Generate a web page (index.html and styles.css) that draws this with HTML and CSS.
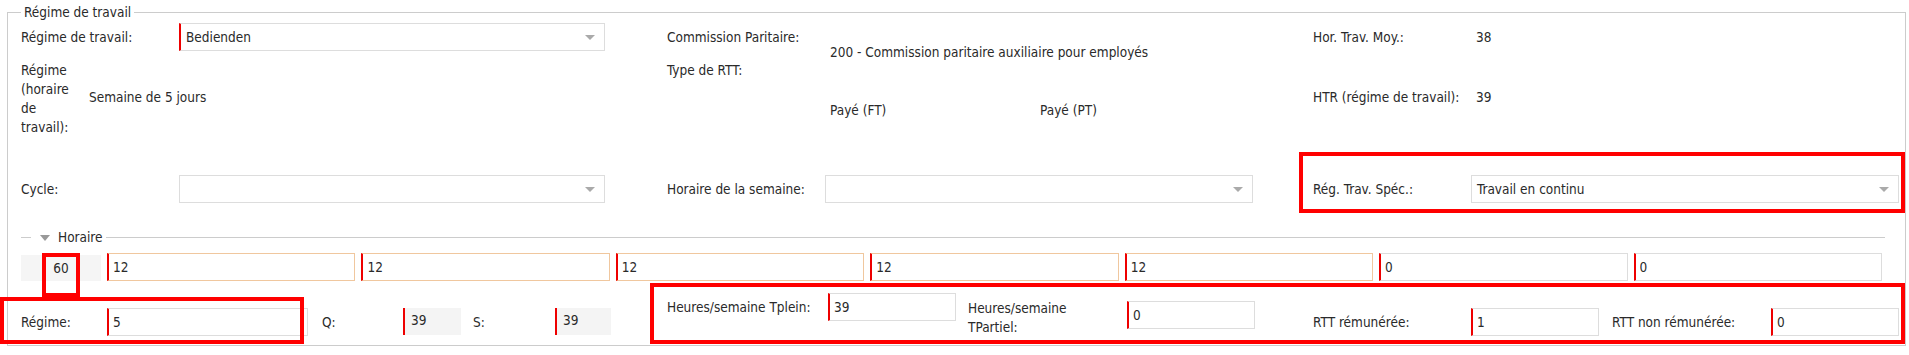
FILE: index.html
```html
<!DOCTYPE html>
<html lang="fr">
<head>
  <meta charset="UTF-8" />
  <meta name="viewport" content="width=device-width, initial-scale=1.0"/>
  <title>Régime de travail</title>
  <link rel="stylesheet" href="styles.css">
</head>
<body>
  <fieldset class="panel">
    <legend>Régime de travail</legend>

    <div class="row row-top">
      <div class="cell">
        <span class="lbl">Régime de travail:</span>
        <div class="select required">Bedienden</div>
      </div>
      <div class="cell">
        <span class="lbl">Commission Paritaire:</span>
        <span class="value value-low">200 - Commission paritaire auxiliaire pour employés</span>
      </div>
      <div class="cell">
        <span class="lbl">Hor. Trav. Moy.:</span>
        <span class="value">38</span>
      </div>
    </div>

    <div class="row row-mid">
      <div class="cell">
        <span class="lbl lbl-narrow">Régime (horaire de travail):</span>
        <span class="value value-center">Semaine de 5 jours</span>
      </div>
      <div class="cell">
        <span class="lbl">Type de RTT:</span>
        <span class="value value-rtt">Payé (FT)</span>
        <span class="value value-rtt">Payé (PT)</span>
      </div>
      <div class="cell">
        <span class="lbl lbl-center">HTR (régime de travail):</span>
        <span class="value value-center">39</span>
      </div>
    </div>

    <div class="row row-cycle">
      <div class="cell">
        <span class="lbl">Cycle:</span>
        <div class="select select-first"></div>
      </div>
      <div class="cell">
        <span class="lbl">Horaire de la semaine:</span>
        <div class="select"></div>
      </div>
      <div class="cell">
        <span class="lbl">Rég. Trav. Spéc.:</span>
        <div class="select">Travail en continu</div>
      </div>
    </div>

    <div class="section-head">
      <span class="caret"></span>
      <span class="section-title">Horaire</span>
    </div>

    <div class="hours">
      <div class="total">60</div>
      <input class="field day" type="text" value="12">
      <input class="field day" type="text" value="12">
      <input class="field day" type="text" value="12">
      <input class="field day" type="text" value="12">
      <input class="field day" type="text" value="12">
      <input class="field" type="text" value="0">
      <input class="field" type="text" value="0">
    </div>

    <div class="row row-bottom">
      <div class="cell">
        <span class="lbl lbl-regime">Régime:</span>
        <input class="field f-regime" type="text" value="5">
        <span class="lbl lbl-q">Q:</span>
        <div class="readout r-q">39</div>
        <span class="lbl lbl-s">S:</span>
        <div class="readout r-s">39</div>
      </div>
      <div class="cell">
        <span class="lbl lbl-plein">Heures/semaine Tplein:</span>
        <input class="field f-small f-plein" type="text" value="39">
        <span class="lbl lbl-partiel">Heures/semaine TPartiel:</span>
        <input class="field f-small f-partiel" type="text" value="0">
      </div>
      <div class="cell cell-rtt">
        <span class="lbl">RTT rémunérée:</span>
        <input class="field f-small" type="text" value="1">
        <span class="lbl lbl-nonrem">RTT non rémunérée:</span>
        <input class="field f-small" type="text" value="0">
      </div>
    </div>
  </fieldset>

  <!-- annotations -->
  <div class="mark mark-spec"></div>
  <div class="mark mark-total"></div>
  <div class="mark mark-regime"></div>
  <div class="mark mark-weekly"></div>
</body>
</html>
```

FILE: styles.css
```css
body {
  margin: 0;
  font-family: "DejaVu Sans Condensed", "DejaVu Sans", sans-serif;
  font-size: 13.5px;
  color: #2a2a2a;
  background: #fff;
}
.panel {
  margin: 4px 3px 0 7px;
  padding: 0 20px 9px 13px;
  border: 1px solid #ccc;
  min-width: 0;
}
.panel legend {
  padding: 0 3px;
  line-height: 16px;
}
.row {
  display: grid;
  grid-template-columns: 586px 586px 586px;
  column-gap: 60px;
}
.cell {
  display: flex;
  align-items: flex-start;
}
.lbl {
  flex: none;
  width: 158px;
  line-height: 28px;
}
.value {
  line-height: 28px;
  margin-left: 5px;
}
.select {
  position: relative;
  flex: none;
  width: 428px;
  height: 28px;
  box-sizing: border-box;
  border: 1px solid #ddd;
  padding: 0 5px;
  line-height: 26px;
}
.select::after {
  content: "";
  position: absolute;
  right: 9px;
  top: 11px;
  border-left: 5px solid transparent;
  border-right: 5px solid transparent;
  border-top: 5px solid #aaa;
}
.select.required {
  border-left: 2px solid #e00;
}
.row-top .select,
.select-first {
  width: 426px;
}

.row-top {
  margin-top: 3px;
  height: 28px;
}
.value-low {
  margin-top: 15px;
}

.row-mid {
  margin-top: 10px;
  height: 76px;
}
.row-mid .lbl,
.row-mid .value {
  line-height: 19px;
}
.lbl-narrow {
  width: 62px;
}
.value-center {
  margin-top: 27px;
}
.lbl-narrow + .value {
  margin-left: 6px;
}
.lbl-center {
  margin-top: 27px;
}
.value-rtt {
  width: 205px;
  margin-top: 40px;
}

.row-cycle {
  margin-top: 38px;
  height: 28px;
}

.section-head {
  display: flex;
  align-items: center;
  margin-top: 26px;
  height: 16px;
}
.section-head::before {
  content: "";
  width: 10px;
  border-top: 1px solid #ccc;
}
.section-head::after {
  content: "";
  flex: 1;
  margin-left: 3px;
  border-top: 1px solid #ccc;
}
.caret {
  margin: 2px 8px 0 9px;
  border-left: 5px solid transparent;
  border-right: 5px solid transparent;
  border-top: 6px solid #999;
}

.hours {
  display: flex;
  gap: 6px;
  width: 1861px;
  margin-top: 8px;
  height: 28px;
}
.total {
  flex: none;
  width: 80px;
  margin-top: 2px;
  background: #f5f5f5;
  text-align: center;
  line-height: 27px;
}
.field {
  min-width: 0;
  height: 28px;
  box-sizing: border-box;
  margin: 0;
  padding: 0 4px;
  border: 1px solid #ddd;
  border-left: 2px solid #e00;
  font: inherit;
  color: #2a2a2a;
  background: #fff;
}
.hours .field {
  flex: 1;
}
.hours .day {
  border-color: #f0c79e;
  border-left-color: #e00;
}

.row-bottom {
  margin-top: 12px;
  height: 43px;
}
.row-bottom .cell > * {
  margin-top: 15px;
}
.lbl-regime {
  width: 86px;
}
.f-regime {
  flex: none;
  width: 201px;
}
.lbl-q {
  width: 81px;
  margin-left: 14px;
}
.lbl-s {
  width: 82px;
  margin-left: 12px;
}
.readout {
  flex: none;
  height: 27px;
  box-sizing: border-box;
  padding-left: 6px;
  border-left: 2px solid #e00;
  background: #f4f4f4;
  line-height: 24px;
}
.r-q {
  width: 58px;
}
.r-s {
  width: 56px;
}
.f-small {
  flex: none;
  width: 128px;
}
.row-bottom .lbl-plein {
  width: 161px;
  margin-top: 0;
}
.row-bottom .f-plein {
  margin-top: 0;
}
.row-bottom .lbl-partiel {
  width: 159px;
  box-sizing: border-box;
  padding-right: 50px;
  margin: 6px 0 0 12px;
  line-height: 19px;
}
.row-bottom .f-partiel {
  margin-top: 8px;
}
.lbl-nonrem {
  width: 159px;
  margin-left: 13px;
}

.mark {
  position: absolute;
  box-sizing: border-box;
  border: 4px solid #f00;
}
.mark-spec {
  left: 1299px;
  top: 152px;
  width: 606px;
  height: 61px;
}
.mark-total {
  left: 42px;
  top: 253px;
  width: 38px;
  height: 44px;
}
.mark-regime {
  left: 0;
  top: 297px;
  width: 304px;
  height: 47px;
}
.mark-weekly {
  left: 650px;
  top: 283px;
  width: 1255px;
  height: 61px;
}
```
